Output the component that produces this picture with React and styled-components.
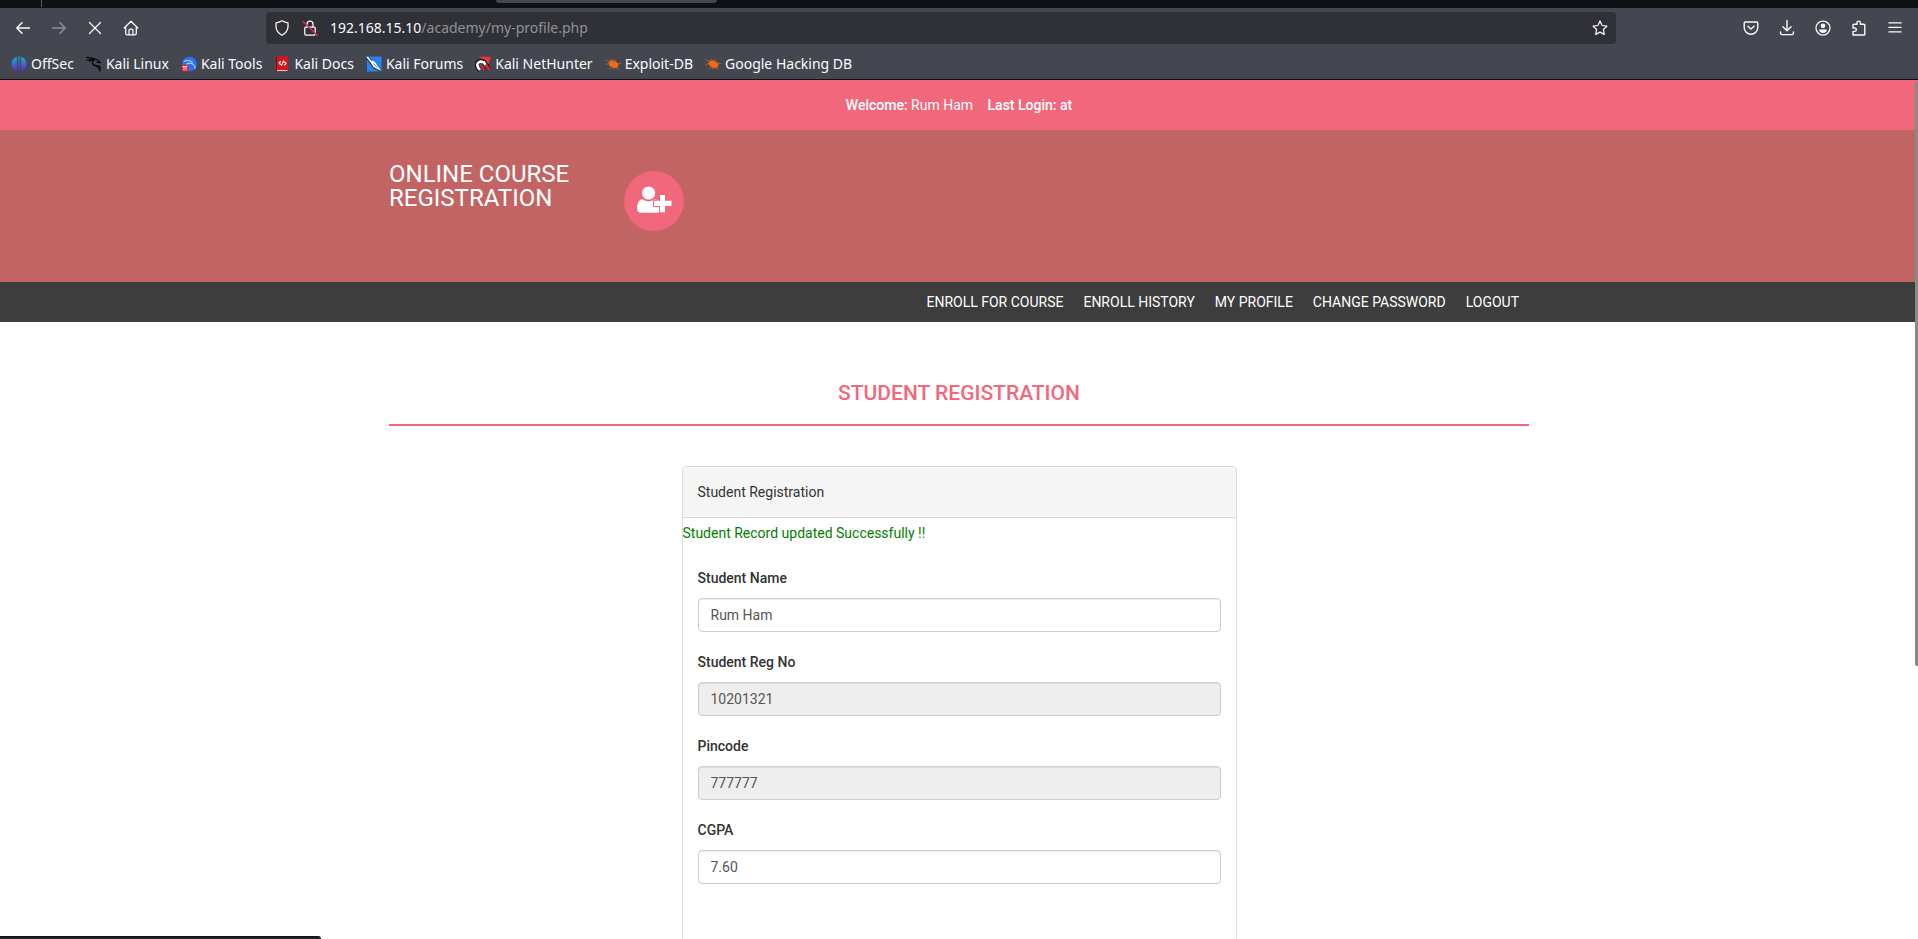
import React from 'react';
import styled, { createGlobalStyle } from 'styled-components';

const pink = '#f1677c';

const GlobalStyle = createGlobalStyle`
  *, *::before, *::after { box-sizing: border-box; }
  body { margin: 0; background: #fff; }
`;

const Window = styled.div`
  position: relative;
  display: flex;
  flex-direction: column;
  height: 100vh;
  overflow: hidden;
  font-family: 'Noto Sans', sans-serif;
`;

const TabStrip = styled.div`
  display: flex;
  flex: none;
  height: 8px;
  background: #0e1014;
`;

const TabDivider = styled.div`
  width: 1px;
  height: 7px;
  margin-left: 41px;
  background: #5b5d63;
`;

const ActiveTab = styled.div`
  width: 221px;
  height: 3px;
  margin-left: 454px;
  background: #44474f;
  border-radius: 0 0 3px 3px;
`;

const Toolbar = styled.div`
  display: flex;
  flex: none;
  align-items: center;
  height: 40px;
  padding: 0 5px;
  background: #44474f;
  color: #fbfbfe;
`;

const ToolGroup = styled.div`
  display: flex;
`;

const ToolButton = styled.button`
  display: flex;
  align-items: center;
  justify-content: center;
  width: 36px;
  height: 32px;
  padding: 0;
  border: 0;
  background: none;
  color: inherit;
  opacity: ${(p) => (p.disabled ? 0.4 : 1)};
`;

const AddressBar = styled.form`
  display: flex;
  flex: 1;
  align-items: center;
  height: 32px;
  margin: 0 117px;
  padding: 0 8px;
  background: #303136;
  border-radius: 4px;
`;

const SiteButton = styled.button`
  display: flex;
  width: 28px;
  padding: 0;
  border: 0;
  background: none;
  color: #fbfbfe;
`;

const Address = styled.div`
  flex: 1;
  font-size: 14px;
  line-height: 20px;
  color: #909196;
  outline: none;
`;

const Host = styled.span`
  color: #fbfbfe;
`;

const StarButton = styled(SiteButton)`
  width: 16px;
`;

const Bookmarks = styled.nav`
  display: flex;
  flex: none;
  align-items: center;
  gap: 12px;
  height: 32px;
  padding: 0 11px;
  background: #44474f;
  border-bottom: 1px solid #0e1014;
`;

const Bookmark = styled.a`
  display: flex;
  align-items: center;
  gap: 4px;
  font-size: 14px;
  line-height: 20px;
  color: #fbfbfe;
  text-decoration: none;
  white-space: nowrap;
`;

const Page = styled.div`
  position: relative;
  flex: 1;
  min-height: 0;
  overflow: hidden;
  background: #fff;
  font-family: Roboto, sans-serif;
  font-size: 14px;
  line-height: 30px;
  color: #333;
`;

const ScrollThumb = styled.div`
  position: absolute;
  top: 2px;
  right: 0;
  width: 3px;
  height: 68%;
  background: #868a89;
  border-radius: 2px 0 0 2px;
`;

const Container = styled.div`
  max-width: 1170px;
  margin: 0 auto;
  padding: 0 15px;
`;

const Greeting = styled.header`
  padding: 10px;
  background: ${pink};
  color: #fff;
  text-align: center;
`;

const Strong = styled.strong`
  font-weight: 500;
`;

const LastLogin = styled(Strong)`
  margin-left: 11px;
`;

const Banner = styled.div`
  height: 152px;
  background: #c36464;
`;

const BannerRow = styled(Container)`
  display: flex;
  gap: 35px;
`;

const Brand = styled.a`
  width: 200px;
  padding-top: 32px;
  font-size: 24px;
  line-height: 24px;
  color: #fff;
  text-decoration: none;
`;

const Badge = styled.div`
  display: flex;
  align-items: center;
  justify-content: center;
  width: 60px;
  height: 60px;
  margin-top: 41px;
  background: ${pink};
  border-radius: 50%;
`;

const Menu = styled.nav`
  background: #3d3d3d;
`;

const MenuRow = styled(Container)`
  display: flex;
  justify-content: flex-end;
`;

const MenuLink = styled.a`
  padding: 5px 10px;
  color: #fff;
  text-decoration: none;
  text-transform: uppercase;
`;

const PageTitle = styled.h1`
  margin: 0;
  padding: 56px 0 16px;
  border-bottom: 2px solid ${pink};
  font-size: 21px;
  font-weight: 500;
  line-height: 30px;
  color: ${pink};
  text-align: center;
  text-transform: uppercase;
`;

const Panel = styled.section`
  max-width: 555px;
  min-height: 640px;
  margin: 40px auto 0;
  border: 1px solid #ddd;
  border-radius: 4px;
`;

const PanelHeading = styled.div`
  padding: 10px 15px;
  background: #f5f5f5;
  border-bottom: 1px solid #ddd;
  border-radius: 3px 3px 0 0;
`;

const Notice = styled.div`
  color: green;
`;

const PanelForm = styled.form`
  padding: 15px;
`;

const Field = styled.div`
  margin-bottom: 15px;
`;

const Label = styled.label`
  display: block;
  margin-bottom: 5px;
  font-weight: 500;
`;

const Input = styled.input`
  display: block;
  width: 100%;
  height: 34px;
  padding: 6px 12px;
  border: 1px solid #ccc;
  border-radius: 4px;
  box-shadow: inset 0 1px 1px rgba(0, 0, 0, 0.075);
  background: ${(p) => (p.readOnly ? '#eee' : '#fff')};
  font-family: inherit;
  font-size: 14px;
  line-height: 20px;
  color: #555;
`;

const StatusPanel = styled.div`
  position: absolute;
  bottom: 0;
  left: 0;
  width: 321px;
  height: 3px;
  background: #23222b;
  border-top: 1px solid #0e1014;
  border-top-right-radius: 3px;
`;

const Icon = ({ children, size = 16 }) => (
  <svg width={size} height={size} viewBox="0 0 16 16" fill="none" stroke="currentColor"
    strokeWidth="1.25" strokeLinecap="round" strokeLinejoin="round" aria-hidden="true">
    {children}
  </svg>
);

const icons = {
  back: <path d="M14.4 8H2M7 2.8 1.8 8 7 13.2" strokeWidth="1.5" />,
  forward: <path d="M1.6 8H14M9 2.8 14.2 8 9 13.2" strokeWidth="1.5" />,
  stop: <path d="M2.5 2.5l11 11M13.5 2.5l-11 11" />,
  home: <path d="M1.2 8 8 1.3 14.8 8M2.7 6.8v6.4q0 1.6 1.6 1.6h7.4q1.6 0 1.6-1.6V6.8M6 14.5V10.2q0-1.2 1.2-1.2h1.6q1.2 0 1.2 1.2v4.3" />,
  shield: <path d="M8 .8q3 1.7 6 2v3.7q0 5.4-6 8.8-6-3.4-6-8.8V2.8q3-.3 6-2Z" />,
  lock: (
    <>
      <path d="M5 7V4.2a3 3 0 0 1 6 0V7M3.8 7h8.4q1 0 1 1v6q0 1-1 1H3.8q-1 0-1-1V8q0-1 1-1Z" />
      <path d="M1 1.5 15.2 15.3" stroke="#e22850" strokeWidth="1.5" />
    </>
  ),
  star: <path d="m8 1 2.1 4.5 4.9.6-3.6 3.4.9 4.9L8 12.1l-4.3 2.3.9-4.9L1 6.1l4.9-.6Z" />,
  pocket: <path d="M2.4 2h11.2q1.2 0 1.2 1.2v4.2a6.8 6.8 0 0 1-13.6 0V3.2Q1.2 2 2.4 2ZM4.9 6.2 8 9.1l3.1-2.9" strokeWidth="1.4" />,
  download: <path d="M8 .6v10M3.9 6.7 8 10.8l4.1-4.1M1.6 12v1.2q0 1.4 1.4 1.4h10q1.4 0 1.4-1.4V12" strokeWidth="1.4" />,
  account: (
    <>
      <circle cx="8" cy="8" r="7" />
      <circle cx="8" cy="5.8" r="2.4" fill="currentColor" stroke="none" />
      <path d="M4 9.6h8q-.3 3.4-4 3.4T4 9.6Z" fill="currentColor" stroke="none" />
    </>
  ),
  extension: <path d="M2 5.2q0-1 1-1h3V2.8a1.7 1.7 0 0 1 3.4 0v1.4h3.4q1 0 1 1v9q0 .8-.8.8H2v-3.6h1.6a1.7 1.7 0 0 0 0-3.4H2Z" strokeWidth="1.4" />,
  menu: <path d="M2 2.9h12M2 7.4h12M2 11.9h12" strokeWidth="1.4" />,
};

const ExploitBug = (
  <g stroke="#f26a16">
    <ellipse cx="8.5" cy="8.3" rx="4.6" ry="2.8" transform="rotate(24 8.5 8.3)" fill="#f26a16" strokeWidth="1" />
    <path d="M1 8.5l3-1M1 4l4 1.5M4.5 12.5l2-1.5M6 3l2 2M9 3.5l1.5 2M12 8l3.5-.5M11 11l2 2.5M8 12v1" strokeWidth=".7" />
  </g>
);

const marks = {
  offsec: (
    <g stroke="none">
      <defs>
        <linearGradient id="offsec" x1="0" y1="0" x2="0" y2="1">
          <stop offset="0" stopColor="#10b4cf" />
          <stop offset="1" stopColor="#6a1fd0" />
        </linearGradient>
      </defs>
      <path d="M5.8.8v14.4Q.5 13.3.5 8T5.8.8ZM6.9.5H9.1V15.5H6.9ZM10.2.8Q15.5 2.7 15.5 8t-5.3 7.2Z" fill="url(#offsec)" />
      <path d="M8 .5v15" stroke="#44474f" strokeWidth=".7" />
    </g>
  ),
  linux: (
    <g stroke="#08090b">
      <path d="M.8 1.3Q6 1.2 8.8 3.2M.8 4.3q3.5-1.5 7-.8M3.5 5.3Q5.5 4 8 4.5M8 2.5q3 .5 6.5 4.2-2-.7-3.5-.4" strokeWidth="1.2" />
      <path d="M8.5 4Q5 6.5 7.5 8.3t5 1.4 1.4 5.6Q13.5 11 10 10.3T6 7.3" strokeWidth="1" fill="#08090b" />
    </g>
  ),
  tools: (
    <g stroke="none">
      <circle cx="8.5" cy="8" r="7.3" fill="#2674f5" />
      <path d="M3 5.5Q7 3 11.5 6.2M5.5 8q4-2.5 7 .5t1.5 4" stroke="#d5e5ff" strokeWidth="1" />
      <rect x=".5" y="8.5" width="7" height="7" rx="2.5" fill="#e5242c" />
      <path d="M2 10.5h4M3 10.5v3.5M5 10.5v3.5" stroke="#fff" strokeWidth=".8" />
    </g>
  ),
  docs: (
    <g stroke="none">
      <path d="M2 1.5 3 .3h11v14l-1 1.5H2Z" fill="#d8151b" />
      <path d="M2.5 14H13.5V15H2.5Z" fill="#f2e5e5" />
      <path d="M2.5 1.5V15" stroke="#8f080e" strokeWidth="1" />
      <path d="M6.5 5.5 5 7l1.5 1.5M10.5 6 12 7.5 10.5 9M9.5 5 7.5 9.5" stroke="#fff" strokeWidth="1.1" />
    </g>
  ),
  forums: (
    <g stroke="none">
      <path d="M1 .5h14.5V15.5H1Z" fill="#2684f0" />
      <path d="m0 .5 3.5 1L6 4.5l3 1.5 2.5 4 4 5.5-5-2.5-4-2.5-1.5-3.5Z" fill="#fff" />
      <path d="M.5 2.5 5 8l2 3.5 8 4M3.5 1.5l2 3" stroke="#111923" strokeWidth=".9" />
      <path d="M8 8 11 11.5" stroke="#526781" strokeWidth=".8" />
    </g>
  ),
  nethunter: (
    <g stroke="none">
      <path d="M4 .8h11.7L13.5 8Z" fill="#f4303c" />
      <path d="M5 14.5Q.5 9.5 2.8 6.5T9 6l5 7" stroke="#17181b" strokeWidth="4.6" strokeLinecap="butt" />
      <path d="M5 14Q1 9.5 3 7t6-.5l2.5 3.5" stroke="#fff" strokeWidth="2.6" strokeLinecap="butt" />
      <path d="m10.5 8.8 4 5" stroke="#e31c31" strokeWidth="3" strokeLinecap="butt" />
      <path d="M5.5 9.5 8.5 13.5" stroke="#e31c31" strokeWidth="1.8" />
    </g>
  ),
  bug: ExploitBug,
};

const bookmarks = [
  ['OffSec', 'offsec'],
  ['Kali Linux', 'linux'],
  ['Kali Tools', 'tools'],
  ['Kali Docs', 'docs'],
  ['Kali Forums', 'forums'],
  ['Kali NetHunter', 'nethunter'],
  ['Exploit-DB', 'bug'],
  ['Google Hacking DB', 'bug'],
];

const navButtons = [
  ['Back', 'back'],
  ['Forward', 'forward'],
  ['Stop', 'stop'],
  ['Home', 'home'],
];

const toolButtons = [
  ['Save to Pocket', 'pocket'],
  ['Downloads', 'download'],
  ['Account', 'account'],
  ['Extensions', 'extension'],
  ['Menu', 'menu'],
];

const menuItems = ['Enroll for Course', 'Enroll History', 'My Profile', 'Change Password', 'Logout'];

const fields = [
  { id: 'studentname', label: 'Student Name', value: 'Rum Ham' },
  { id: 'studentregno', label: 'Student Reg No', value: '10201321', readOnly: true },
  { id: 'pincode', label: 'Pincode', value: '777777', readOnly: true },
  { id: 'cgpa', label: 'CGPA', value: '7.60' },
];

const BrowserChrome = () => (
  <>
    <TabStrip>
      <TabDivider />
      <ActiveTab />
    </TabStrip>
    <Toolbar>
      <ToolGroup>
        {navButtons.map(([label, icon]) => (
          <ToolButton key={label} type="button" aria-label={label} disabled={icon === 'forward'}>
            <Icon>{icons[icon]}</Icon>
          </ToolButton>
        ))}
      </ToolGroup>
      <AddressBar>
        <SiteButton type="button" aria-label="Tracking protection"><Icon>{icons.shield}</Icon></SiteButton>
        <SiteButton type="button" aria-label="Connection not secure"><Icon>{icons.lock}</Icon></SiteButton>
        <Address role="textbox" aria-label="Address" contentEditable suppressContentEditableWarning spellCheck={false}>
          <Host>192.168.15.10</Host>/academy/my-profile.php
        </Address>
        <StarButton type="button" aria-label="Bookmark this page"><Icon>{icons.star}</Icon></StarButton>
      </AddressBar>
      <ToolGroup>
        {toolButtons.map(([label, icon]) => (
          <ToolButton key={label} type="button" aria-label={label}>
            <Icon>{icons[icon]}</Icon>
          </ToolButton>
        ))}
      </ToolGroup>
    </Toolbar>
    <Bookmarks aria-label="Bookmarks">
      {bookmarks.map(([label, mark]) => (
        <Bookmark key={label} href="#">
          <Icon>{marks[mark]}</Icon>
          {label}
        </Bookmark>
      ))}
    </Bookmarks>
  </>
);

const UserPlus = () => (
  <svg width="36" height="30" viewBox="0 -1 36 30" fill="#fff" aria-hidden="true">
    <path d="M6.3 12.3Q12.6 16.5 18.8 12.3 21 12.4 23 14v11.2q-1 .6-2.5.6H5.5Q1 25.8 1 21.5 1 13 6.3 12.3Z" />
    <circle cx="12.6" cy="6" r="6.6" />
    <path d="M24 8h5v5.7h6.5V19H29v6.3h-5V19h-6v-5.3h6Z" stroke={pink} strokeWidth="2" paintOrder="stroke" />
  </svg>
);

export default function App() {
  return (
    <Window>
      <GlobalStyle />
      <BrowserChrome />
      <Page>
        <Greeting>
          <Strong>Welcome:</Strong> Rum Ham <LastLogin>Last Login: at</LastLogin>
        </Greeting>
        <Banner>
          <BannerRow>
            <Brand href="#">ONLINE COURSE REGISTRATION</Brand>
            <Badge><UserPlus /></Badge>
          </BannerRow>
        </Banner>
        <Menu>
          <MenuRow>
            {menuItems.map((item) => <MenuLink key={item} href="#">{item}</MenuLink>)}
          </MenuRow>
        </Menu>
        <Container as="main">
          <PageTitle>Student Registration</PageTitle>
          <Panel>
            <PanelHeading>Student Registration</PanelHeading>
            <Notice role="status">Student Record updated Successfully !!</Notice>
            <PanelForm>
              {fields.map(({ id, label, value, readOnly }) => (
                <Field key={id}>
                  <Label htmlFor={id}>{label}</Label>
                  <Input id={id} type="text" defaultValue={value} readOnly={readOnly} />
                </Field>
              ))}
            </PanelForm>
          </Panel>
        </Container>
        <ScrollThumb />
      </Page>
      <StatusPanel />
    </Window>
  );
}
